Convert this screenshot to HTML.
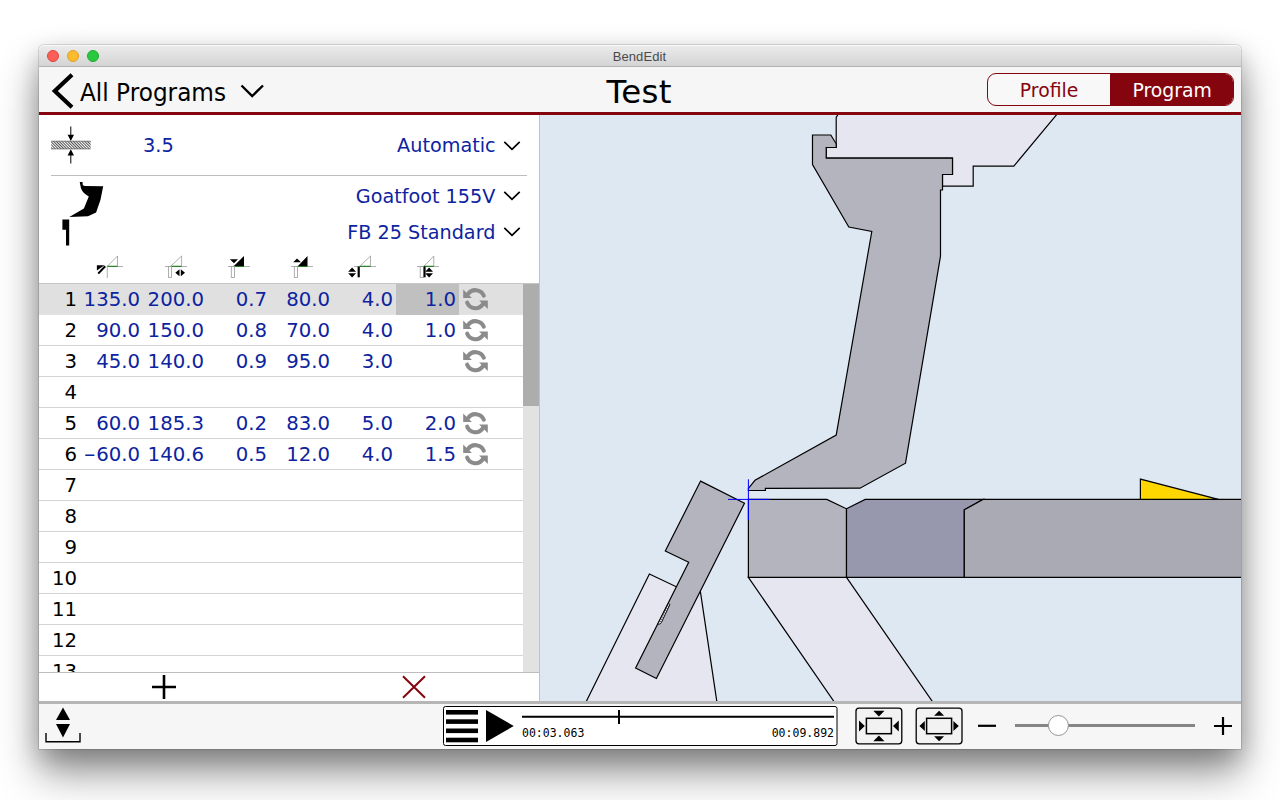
<!DOCTYPE html>
<html lang="en">
<head>
<meta charset="utf-8">
<title>BendEdit</title>
<style>
html,body{margin:0;padding:0;width:1280px;height:800px;overflow:hidden;background:#fff;}
body{font-family:"DejaVu Sans","Liberation Sans",sans-serif;position:relative;}
#win{position:absolute;left:39px;top:45px;width:1202px;height:704px;background:#f6f6f6;border-radius:5px 5px 0 0;
 box-shadow:0 0 0 1px rgba(0,0,0,.12),0 24px 42px rgba(0,0,0,.42),0 9px 24px rgba(0,0,0,.2);overflow:hidden;}
.abs{position:absolute;}
#titlebar{left:0;top:0;width:1202px;height:22px;background:linear-gradient(#ececec,#d4d4d4);border-bottom:1px solid #b3b3b3;box-sizing:border-box;box-shadow:inset 0 1px 0 rgba(255,255,255,.65);border-radius:5px 5px 0 0;}
#titlebar .t{position:absolute;left:-1px;right:0;top:4px;letter-spacing:.12px;text-align:center;font:13px "Liberation Sans",sans-serif;color:#4a4a4a;line-height:16px;}
.tl{position:absolute;top:5px;width:12px;height:12px;border-radius:50%;box-sizing:border-box;}
#toolbar{left:0;top:22px;width:1202px;height:45px;background:#f6f6f6;}
#redline{left:0;top:67px;width:1202px;height:3px;background:#85050f;}
#back{left:41px;top:34px;font-size:24px;line-height:28px;color:#000;white-space:pre;transform:scaleX(.966);transform-origin:0 50%;}
#title{left:-0.8px;width:1202px;top:28px;letter-spacing:.3px;text-align:center;font-size:32.5px;line-height:38px;color:#000;}
#seg{left:948px;top:28px;width:247px;height:33px;box-sizing:border-box;border:1px solid #85050f;border-radius:9px;overflow:hidden;background:#f8f8f8;}
#seg div{position:absolute;top:0;height:31px;line-height:33px;text-align:center;font-size:20px;}
#seg span{display:inline-block;transform:scaleX(.94);}
#seg .a{left:0;width:122px;color:#85050f;}
#seg .b{left:122px;width:124px;background:#85050f;color:#fff;}
#panel{left:0;top:70px;width:500px;height:586px;background:#fff;overflow:hidden;}
#canvas{left:500px;top:70px;width:702px;height:586px;background:#dee8f2;overflow:hidden;box-shadow:inset 1px 0 0 #c2c2c6;}
#bottom{left:0;top:656px;width:1202px;height:48px;background:#f6f6f6;border-top:3px solid #b6b6b6;box-sizing:border-box;}
.blue{color:#0d23a0;}
.dd{position:absolute;right:27px;font-size:20px;line-height:24px;color:#0d23a0;white-space:pre;text-align:right;transform:scaleX(.96);transform-origin:100% 50%;}
.row{position:absolute;left:0;width:484px;height:31px;box-sizing:border-box;border-bottom:1px solid #d4d4d4;font-size:20px;line-height:30px;}
.row span{position:absolute;top:0;text-align:right;white-space:pre;color:#0d23a0;transform:scaleX(.985);transform-origin:100% 50%;}
.row .n{color:#000;left:0;width:38px;}
.row .c1{left:38px;width:63px;}
.row .c2{left:101px;width:64px;}
.row .c3{left:165px;width:63px;}
.row .c4{left:228px;width:63px;}
.row .c5{left:291px;width:63px;}
.row .c6{left:357px;width:60px;}
.row .hy{display:inline-block;font-weight:normal;transform:scaleX(1.75);transform-origin:100% 50%;margin-right:.7px;letter-spacing:0}
.row svg{position:absolute;left:423px;top:3px;}
</style>
</head>
<body>
<div id="win">
 <div id="titlebar" class="abs">
  <div class="tl" style="left:8px;background:#fc5f57;border:1px solid #e0443e"></div>
  <div class="tl" style="left:28px;background:#fdbc2e;border:1px solid #dea123"></div>
  <div class="tl" style="left:48px;background:#28c840;border:1px solid #1dad2b"></div>
  <div class="t">BendEdit</div>
 </div>
 <div id="toolbar" class="abs"></div>
 <svg class="abs" style="left:10px;top:26px" width="30" height="40" viewBox="0 0 30 40"><path d="M23 3.8 L5.8 20 L23 36.2" fill="none" stroke="#000" stroke-width="4.2" stroke-linejoin="miter"/></svg>
 <div id="back" class="abs">All Programs</div>
 <svg class="abs" style="left:200px;top:38px" width="28" height="18" viewBox="0 0 28 18"><path d="M2.5 2.5 L13.2 13 L24 2.5" fill="none" stroke="#000" stroke-width="2.4"/></svg>
 <div id="title" class="abs">Test</div>
 <div id="seg" class="abs"><div class="a"><span>Profile</span></div><div class="b"><span>Program</span></div></div>
 <div id="redline" class="abs"></div>

 <div id="panel" class="abs">
  <!--PANEL-->
<svg class="abs" style="left:10px;top:9px" width="44" height="42" viewBox="49 124 44 42">
<defs><pattern id="hz" width="2" height="2" patternUnits="userSpaceOnUse" patternTransform="translate(51.2 141.2) rotate(45)"><rect x="0" y="0" width="2" height="0.8" fill="#222"/></pattern></defs>
<rect x="51.2" y="141.2" width="39.4" height="7.7" fill="#fff"/><rect x="51.2" y="141.2" width="39.4" height="7.7" fill="url(#hz)"/>
<path d="M51.2 141.2 H90.6 M51.2 148.9 H90.6" stroke="#555" stroke-width="0.7"/>
<path d="M70.8 126.5 V138 M70.8 163.5 V152" stroke="#000" stroke-width="1"/>
<path d="M67.6 134.8 L74 134.8 L70.8 141 Z M67.6 155.4 L74 155.4 L70.8 149.3 Z" fill="#000"/>
</svg>
<div class="abs blue" style="left:104px;top:18px;font-size:20px;line-height:24px;transform:scaleX(.97);transform-origin:0 50%">3.5</div>
<div class="dd" style="top:18px;right:43.4px">Automatic</div>
<div class="abs" style="left:12px;top:60px;width:476px;height:1px;background:#bdbdbd"></div>
<div class="dd" style="top:69px;right:43.4px">Goatfoot 155V</div>
<div class="dd" style="top:105px;right:43.4px">FB 25 Standard</div>
<svg class="abs" style="left:462.8px;top:24.8px" width="20" height="12" viewBox="0 0 20 12"><path d="M2.3 1.8 L10 9.4 L17.7 1.8" fill="none" stroke="#000" stroke-width="1.7"/></svg>
<svg class="abs" style="left:462.8px;top:75.4px" width="20" height="12" viewBox="0 0 20 12"><path d="M2.3 1.8 L10 9.4 L17.7 1.8" fill="none" stroke="#000" stroke-width="1.7"/></svg>
<svg class="abs" style="left:462.8px;top:111.4px" width="20" height="12" viewBox="0 0 20 12"><path d="M2.3 1.8 L10 9.4 L17.7 1.8" fill="none" stroke="#000" stroke-width="1.7"/></svg>
<svg class="abs" style="left:20px;top:65px" width="50" height="68" viewBox="59 180 50 68">
<path d="M79.7 182 H82.6 V184.6 Q83 185.9 84.8 186 L103.2 186.2 L100.5 199.8 L96.1 212.4 L88 216.3 L69.3 217 L83.9 208.6 L88.8 196.4 Q83 193.5 81 188.5 Z" fill="#000"/>
<path d="M62.4 219.5 H69.2 V245.6 H66 V229.8 H62.4 Z" fill="#000"/>
</svg>
<svg class="abs" style="left:51px;top:137px" width="360" height="30" viewBox="90 252 360 30"><path d="M107.0 266.5 H123.0" stroke="#9a9a9a" stroke-width="0.8"/><path d="M107.3 266.3 L117.5 256 V266.3" fill="none" stroke="#9a9a9a" stroke-width="0.8"/><path d="M107.3 266.3 H117.5" stroke="#1c7a1c" stroke-width="1.1"/><path d="M107.3 266 V278" stroke="#9a9a9a" stroke-width="0.8"/><path d="M96.9 265.2 H104.5 L96.9 270.5 Z" fill="#000"/><path d="M98.2 273.6 L105.2 266.2" stroke="#000" stroke-width="2"/><path d="M165.0 266.5 H187.0" stroke="#9a9a9a" stroke-width="0.8"/><path d="M170.6 266.3 L181.6 256 V266.3" fill="none" stroke="#9a9a9a" stroke-width="0.8"/><path d="M170.6 266.3 H181.6" stroke="#1c7a1c" stroke-width="1.1"/><rect x="168.4" y="266.5" width="3" height="11" fill="#fff" stroke="#9a9a9a" stroke-width="0.8"/><path d="M175.3 272.8 L179.5 269.3 V276.3 Z M185 272.8 L180.8 269.3 V276.3 Z" fill="#000"/><path d="M228 266.5 H250" stroke="#9a9a9a" stroke-width="0.8"/><path d="M233 266.4 H244" stroke="#1c7a1c" stroke-width="1.1"/><rect x="231.3" y="266.5" width="3.2" height="11" fill="#fff" stroke="#9a9a9a" stroke-width="0.8"/><path d="M233.9 266 L244 256 V266 Z M229.8 259.3 H238 L234 263.2 Z" fill="#000"/><path d="M291 266.5 H313" stroke="#9a9a9a" stroke-width="0.8"/><path d="M297 266.4 H307.5" stroke="#1c7a1c" stroke-width="1.1"/><rect x="294.3" y="266.5" width="3.2" height="11" fill="#fff" stroke="#9a9a9a" stroke-width="0.8"/><path d="M298 266 L307.5 256 V266 Z M293.2 262.2 H301 L297 258.6 Z" fill="#000"/><path d="M354.0 266.5 H376.0" stroke="#9a9a9a" stroke-width="0.8"/><path d="M359.8 266.3 L370.5 256 V266.3" fill="none" stroke="#9a9a9a" stroke-width="0.8"/><path d="M359.8 266.3 H370.5" stroke="#1c7a1c" stroke-width="1.1"/><rect x="357.6" y="266.5" width="2.2" height="10.8" fill="#000"/><path d="M348.2 271.8 H356 L352.1 267.6 Z M348.2 273.2 H356 L352.1 277.4 Z" fill="#000"/><path d="M417.0 266.5 H439.0" stroke="#9a9a9a" stroke-width="0.8"/><path d="M423.9 266.3 L433.8 256 V266.3" fill="none" stroke="#9a9a9a" stroke-width="0.8"/><path d="M423.9 266.3 H433.8" stroke="#1c7a1c" stroke-width="1.1"/><rect x="420.2" y="266.5" width="3.4" height="11" fill="#fff" stroke="#9a9a9a" stroke-width="0.8"/><rect x="423.6" y="266.5" width="2" height="10.8" fill="#000"/><path d="M425.2 271.8 H433 L429.1 267.6 Z M425.2 273.2 H433 L429.1 277.4 Z" fill="#000"/></svg>
<div class="abs" style="left:0;top:168px;width:500px;height:389px;overflow:hidden;border-top:1px solid #c6c6c6;box-sizing:border-box">
<div class="row" style="top:0px;background:#e0e0e0;border-bottom-color:#e4e4e4"><i style="position:absolute;left:357px;top:0;width:63px;height:31px;background:#c0c0c0"></i><span class="n">1</span><span class="c1">135.0</span><span class="c2">200.0</span><span class="c3">0.7</span><span class="c4">80.0</span><span class="c5">4.0</span><span class="c6">1.0</span><svg width="26" height="24" viewBox="0 0 26 24"><g fill="none" stroke="#8b8b8b" stroke-width="4.1" stroke-linecap="round"><path d="M6.0 7.2 A9 9 0 0 1 21.8 8.7"/><path d="M21 17.2 A9 9 0 0 1 5.2 15.7"/><path d="M1.2 2.4 V10.9 H9.9 Z" fill="#8b8b8b" stroke="none"/><path d="M25.8 22 V13.5 H17.1 Z" fill="#8b8b8b" stroke="none"/></g></svg></div>
<div class="row" style="top:31px"><span class="n">2</span><span class="c1">90.0</span><span class="c2">150.0</span><span class="c3">0.8</span><span class="c4">70.0</span><span class="c5">4.0</span><span class="c6">1.0</span><svg width="26" height="24" viewBox="0 0 26 24"><g fill="none" stroke="#8b8b8b" stroke-width="4.1" stroke-linecap="round"><path d="M6.0 7.2 A9 9 0 0 1 21.8 8.7"/><path d="M21 17.2 A9 9 0 0 1 5.2 15.7"/><path d="M1.2 2.4 V10.9 H9.9 Z" fill="#8b8b8b" stroke="none"/><path d="M25.8 22 V13.5 H17.1 Z" fill="#8b8b8b" stroke="none"/></g></svg></div>
<div class="row" style="top:62px"><span class="n">3</span><span class="c1">45.0</span><span class="c2">140.0</span><span class="c3">0.9</span><span class="c4">95.0</span><span class="c5">3.0</span><svg width="26" height="24" viewBox="0 0 26 24"><g fill="none" stroke="#8b8b8b" stroke-width="4.1" stroke-linecap="round"><path d="M6.0 7.2 A9 9 0 0 1 21.8 8.7"/><path d="M21 17.2 A9 9 0 0 1 5.2 15.7"/><path d="M1.2 2.4 V10.9 H9.9 Z" fill="#8b8b8b" stroke="none"/><path d="M25.8 22 V13.5 H17.1 Z" fill="#8b8b8b" stroke="none"/></g></svg></div>
<div class="row" style="top:93px"><span class="n">4</span></div>
<div class="row" style="top:124px"><span class="n">5</span><span class="c1">60.0</span><span class="c2">185.3</span><span class="c3">0.2</span><span class="c4">83.0</span><span class="c5">5.0</span><span class="c6">2.0</span><svg width="26" height="24" viewBox="0 0 26 24"><g fill="none" stroke="#8b8b8b" stroke-width="4.1" stroke-linecap="round"><path d="M6.0 7.2 A9 9 0 0 1 21.8 8.7"/><path d="M21 17.2 A9 9 0 0 1 5.2 15.7"/><path d="M1.2 2.4 V10.9 H9.9 Z" fill="#8b8b8b" stroke="none"/><path d="M25.8 22 V13.5 H17.1 Z" fill="#8b8b8b" stroke="none"/></g></svg></div>
<div class="row" style="top:155px"><span class="n">6</span><span class="c1"><b class="hy">-</b>60.0</span><span class="c2">140.6</span><span class="c3">0.5</span><span class="c4">12.0</span><span class="c5">4.0</span><span class="c6">1.5</span><svg width="26" height="24" viewBox="0 0 26 24"><g fill="none" stroke="#8b8b8b" stroke-width="4.1" stroke-linecap="round"><path d="M6.0 7.2 A9 9 0 0 1 21.8 8.7"/><path d="M21 17.2 A9 9 0 0 1 5.2 15.7"/><path d="M1.2 2.4 V10.9 H9.9 Z" fill="#8b8b8b" stroke="none"/><path d="M25.8 22 V13.5 H17.1 Z" fill="#8b8b8b" stroke="none"/></g></svg></div>
<div class="row" style="top:186px"><span class="n">7</span></div>
<div class="row" style="top:217px"><span class="n">8</span></div>
<div class="row" style="top:248px"><span class="n">9</span></div>
<div class="row" style="top:279px"><span class="n">10</span></div>
<div class="row" style="top:310px"><span class="n">11</span></div>
<div class="row" style="top:341px"><span class="n">12</span></div>
<div class="row" style="top:372px"><span class="n">13</span></div>
<div class="abs" style="left:484px;top:0;width:16px;height:389px;background:#e2e2e2"></div>
<div class="abs" style="left:484px;top:0;width:16px;height:122px;background:#adadad"></div>
</div>
<div class="abs" style="left:0;top:557px;width:500px;height:29px;background:#fff;border-top:1px solid #bdbdbd;box-sizing:border-box"></div>
<svg class="abs" style="left:111.0px;top:558.0px" width="28" height="28" viewBox="0 0 28 28"><path d="M14 2 V26 M2 14 H26" stroke="#000" stroke-width="2.6"/></svg>
<svg class="abs" style="left:361.0px;top:558.0px" width="28" height="28" viewBox="0 0 28 28"><path d="M3 3.2 L25 24.8 M25 3.2 L3 24.8" stroke="#85050f" stroke-width="2"/></svg>
<!--/PANEL-->
 </div>
 <div id="canvas" class="abs">
  <!--CANVAS-->
<svg class="abs" style="left:0;top:0" width="702" height="586" viewBox="539 115 702 586"><g stroke="#000" stroke-width="1.2" stroke-linejoin="miter">
<polygon points="838.8,113.0 836.2,117.5 836.2,147.5 826.2,147.5 826.2,158.2 952.5,158.2 952.5,174.5 942.5,174.5 942.5,186.2 973.2,186.2 973.2,166.2 1013.8,166.2 1058.0,113.0" fill="#e6e6f1" />
<polygon points="812.5,135.0 830.8,135.0 836.2,143.8 836.2,147.5 826.2,147.5 826.2,158.2 952.5,158.2 952.5,174.5 942.5,174.5 942.5,190.0 940.5,190.0 940.5,256.2 905.5,463.2 860.0,488.2 765.4,488.4 765.4,490.5 748.4,490.5 748.4,488.4 755.0,480.3 836.2,435.0 871.8,231.5 848.8,227.0 812.5,164.5" fill="#b4b4be" />
<polygon points="649.4,574.0 692.0,594.2 700.4,591.6 716.9,702.0 586.0,702.0" fill="#e6e6f1" />
<polygon points="700.6,481.1 744.5,503.3 656.4,678.5 635.6,668.1 688.7,562.3 665.3,551.0" fill="#b4b4be" />
<polygon points="668.3,603.5 670,604.4 661.4,622.6 660.2,623.9 657.6,624.4" fill="#e6e6f1" stroke-width="0.9"/>
<path d="M667.2 605.8 L669 606.4 M666 608 L667.9 608.7 M664.9 610.2 L666.8 610.9 M663.8 612.4 L665.7 613.1 M662.7 614.6 L664.6 615.3 M661.6 616.8 L663.5 617.5 M660.5 619 L662.4 619.7 M659.4 621.2 L661.4 621.9" stroke-width="0.6" fill="none"/>
<polygon points="748.4,577.4 834.3,702.0 932.7,702.0 846.5,577.4" fill="#e6e6f1" />
<polygon points="748.4,499.4 826.8,499.4 846.5,508.8 846.5,577.4 748.4,577.4" fill="#b4b4be" />
<polygon points="846.5,508.8 865.2,499.4 983.0,499.4 964.3,509.8 964.3,577.4 846.5,577.4" fill="#9797ae" />
<polygon points="964.3,509.8 983.0,499.4 1243.0,499.4 1243.0,577.4 964.3,577.4" fill="#aaaab4" />
<polygon points="1140.4,479.1 1140.4,499.4 1218.4,499.4" fill="#ffd700" />
</g><path d="M748.4 479.3 V520 M728 499.4 H768.9" stroke="#0000ff" stroke-width="1" fill="none"/></svg>
<!--/CANVAS-->
 </div>
 <div id="bottom" class="abs">
  <!--BOTTOM-->
<svg class="abs" style="left:0;top:-3px" width="1202" height="48" viewBox="39 701 1202 48">
<path d="M63 707.4 L70 720 H56 Z M63 737.4 L70 724 H56 Z" fill="#000"/><path d="M46 733 V741.8 H80 V733" fill="none" stroke="#000" stroke-width="1.4"/>
<rect x="443.5" y="706.5" width="393.5" height="39" rx="2" fill="#fff" stroke="#000" stroke-width="1"/>
<rect x="446" y="710.0" width="32" height="4.6" fill="#000"/>
<rect x="446" y="719.3" width="32" height="4.6" fill="#000"/>
<rect x="446" y="728.5" width="32" height="4.6" fill="#000"/>
<rect x="446" y="737.7" width="32" height="4.6" fill="#000"/>
<path d="M486 710 L513.8 726 L486 742 Z" fill="#000"/>
<path d="M522 716.7 H834" stroke="#000" stroke-width="2"/><path d="M619 710 V724" stroke="#000" stroke-width="2"/>
<text x="522" y="737" font-family="'DejaVu Sans Mono','Liberation Mono',monospace" font-size="11.5" fill="#000">00:03.063</text>
<text x="834" y="737" text-anchor="end" font-family="'DejaVu Sans Mono','Liberation Mono',monospace" font-size="11.5" fill="#000">00:09.892</text>
<rect x="856.0" y="708.2" width="45.8" height="35.6" rx="3" fill="#f2f2f2" stroke="#000" stroke-width="1.3"/>
<rect x="866.4" y="718.3" width="25" height="15.4" fill="none" stroke="#000" stroke-width="1.5"/>
<path d="M873.3 710.8 h11.2 l-5.6 5.7 Z M873.3 741.2 h11.2 l-5.6 -5.7 Z M859.0 720.5 v11 l5.8 -5.5 Z M898.8 720.5 v11 l-5.8 -5.5 Z" fill="#000"/>
<rect x="916.2" y="708.2" width="45.8" height="35.6" rx="3" fill="#f2f2f2" stroke="#000" stroke-width="1.3"/>
<rect x="926.6" y="718.3" width="25" height="15.4" fill="none" stroke="#000" stroke-width="1.5"/>
<path d="M934.1 715.8 h10 l-5 -5 Z M934.1 736.2 h10 l-5 5 Z M924.8 721.0 v10 l-5.4 -5 Z M953.4 721.0 v10 l5.4 -5 Z" fill="#000"/>
<path d="M978 725.8 H996" stroke="#000" stroke-width="2.2"/>
<path d="M1015 725.5 H1195" stroke="#858585" stroke-width="3"/>
<circle cx="1058.4" cy="725.5" r="10" fill="#fff" stroke="#8a8a8a" stroke-width="0.9"/>
<path d="M1214 726 H1232 M1223 717 V735" stroke="#000" stroke-width="2.2"/>
</svg>
<!--/BOTTOM-->
 </div>
</div>
</body>
</html>
